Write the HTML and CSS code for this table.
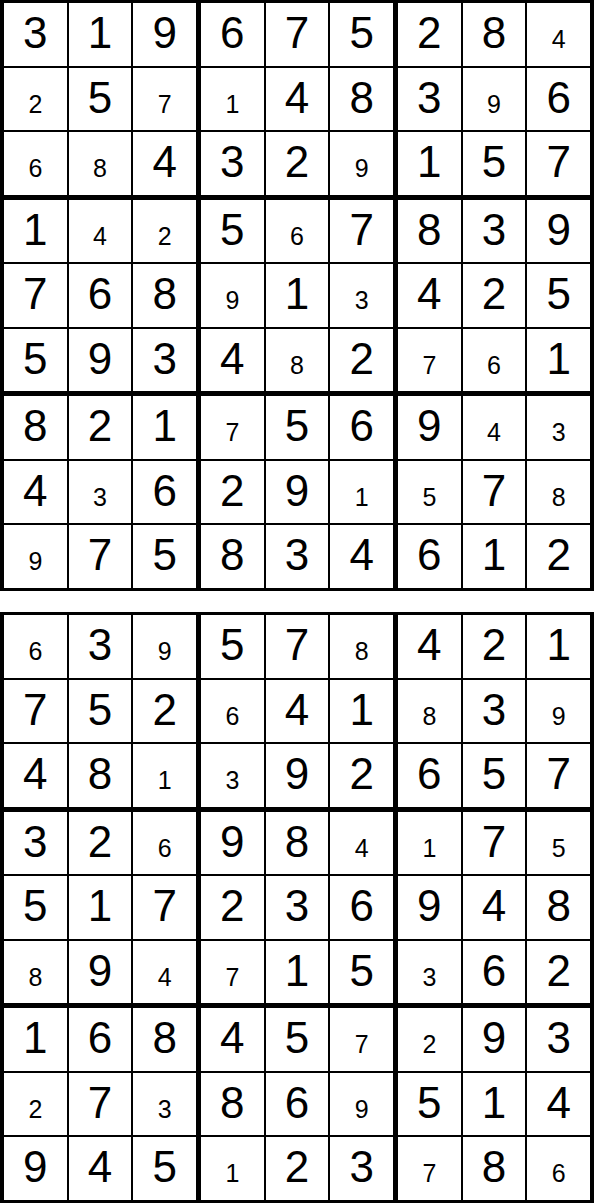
FILE: index.html
```html
<!DOCTYPE html>
<html lang="en">
<head>
  <meta charset="UTF-8" />
  <meta name="viewport" content="width=device-width, initial-scale=1.0"/>
  <title>Sudoku Solutions</title>
  <link rel="stylesheet" href="styles.css">
</head>
<body>

  <div class="page">
    <div class="sudoku" id="grid1"></div>
    <div class="sudoku" id="grid2"></div>
  </div>

  <script>
    // Solved grids: digits row by row, "1" in the mask marks a small (given) digit
    const puzzles = [
      {
        id: "grid1",
        digits: ["319675284", "257148396", "684329157", "142567839", "768913425",
                 "593482761", "821756943", "436291578", "975834612"],
        small:  ["000000001", "101100010", "110001000", "011010000", "000101000",
                 "000010110", "000100011", "010001101", "100000000"]
      },
      {
        id: "grid2",
        digits: ["639578421", "752641839", "481392657", "326984175", "517236948",
                 "894715362", "168457293", "273869514", "945123786"],
        small:  ["101001000", "000100101", "001100000", "001001101", "000000000",
                 "101100100", "000001100", "101001000", "000100101"]
      }
    ];

    for (let p of puzzles) {
      let html = "";
      for (let b = 0; b < 9; b++) {
        html += '<div class="box">';
        for (let r = 0; r < 3; r++) {
          for (let c = 0; c < 3; c++) {
            const row = Math.floor(b / 3) * 3 + r;
            const col = (b % 3) * 3 + c;
            const d = p.digits[row][col];
            if (p.small[row][col] === "1") {
              html += `<div class="cell"><span class="small">${d}</span></div>`;
            } else {
              html += `<div class="cell">${d}</div>`;
            }
          }
        }
        html += "</div>";
      }
      document.getElementById(p.id).innerHTML = html;
    }
  </script>
</body>
</html>
```

FILE: styles.css
```css
body {
  margin: 0;
  background-color: #fff;
  font-family: "Liberation Sans", Arial, sans-serif;
}

.page {
  display: flex;
  flex-direction: column;
  gap: 21px;
}

.sudoku {
  height: 591px;
  box-sizing: border-box;
  border: 4px solid #000;
  border-top-width: 3px;
  border-bottom-width: 3px;
  background-color: #000;
  display: grid;
  grid-template-columns: repeat(3, minmax(0, 1fr));
  grid-template-rows: repeat(3, minmax(0, 1fr));
  gap: 5px;
}

.box {
  display: grid;
  grid-template-columns: repeat(3, minmax(0, 1fr));
  grid-template-rows: repeat(3, minmax(0, 1fr));
  gap: 2px;
}

.cell {
  background-color: #fff;
  color: #000;
  text-align: center;
  font-size: 44px;
  line-height: 60px;
  overflow: hidden;
}

.small {
  font-size: 25px;
}
```
